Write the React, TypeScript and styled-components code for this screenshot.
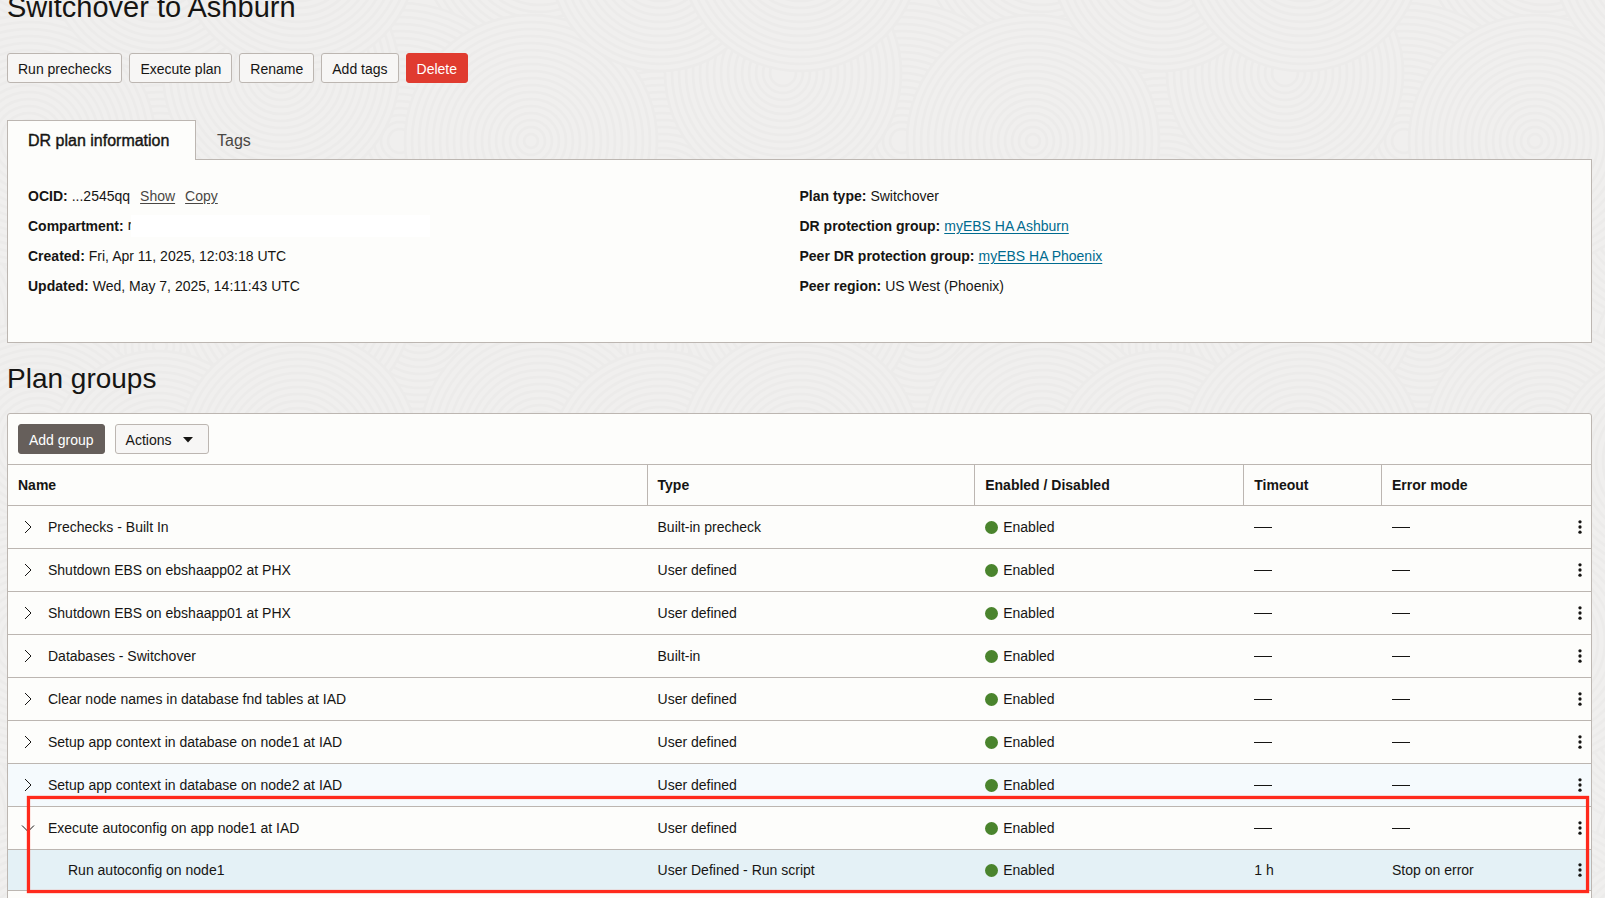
import React from 'react';
import styled, { createGlobalStyle, css } from 'styled-components';

const BORDER = '#bcb6b1';
const SURFACE = '#fdfdfb';
const INK = '#161513';

const GlobalStyle = createGlobalStyle`
  * { box-sizing: border-box; }
  html, body { margin: 0; overflow: hidden; }
  body {
    background: #f0efee;
    color: ${INK};
    font: 14px/20px "Liberation Sans", Arial, sans-serif;
  }
  #root { height: 100vh; overflow: hidden; }
`;

const Page = styled.main`
  position: relative;
  isolation: isolate;
  min-height: 100vh;
  padding: 0 13px 0 7px;
`;

const Backdrop = styled.svg`
  position: absolute;
  inset: 0;
  z-index: -1;
  width: 100%;
  height: 100%;
`;

const Heading = styled.h1`
  margin: 0;
  font-size: 28px;
  line-height: 32px;
  font-weight: 400;
`;

const Title = styled(Heading)`
  margin-top: -9px;
  font-size: 29px;
`;

const SectionTitle = styled(Heading).attrs({ as: 'h2' })`
  margin: 20px 0 18px;
`;

const ButtonRow = styled.div<{ $gap: number }>`
  display: flex;
  gap: ${(p) => p.$gap}px;
`;

type Tone = 'plain' | 'danger' | 'dark';

const tones = {
  plain: css`background: #f7f6f5; border-color: ${BORDER}; color: ${INK};`,
  danger: css`background: #e03b2f; border-color: #e03b2f; color: #fff;`,
  dark: css`background: #665f5b; border-color: #665f5b; color: #fff;`,
};

const Button = styled.button<{ $tone?: Tone }>`
  display: flex;
  align-items: center;
  height: 30px;
  padding: 2px 10px 0;
  border: 1px solid;
  border-radius: 3px;
  font: inherit;
  white-space: nowrap;
  ${(p) => tones[p.$tone ?? 'plain']}
`;

const MenuTrigger = styled(Button)`
  gap: 11px;
  padding-right: 15px;
`;

const Toolbar = styled(ButtonRow)`
  margin-top: 30px;
`;

const Tabs = styled.div`
  display: flex;
  margin-top: 37px;
`;

const Tab = styled.button<{ $active?: boolean }>`
  height: 40px;
  margin-bottom: -1px;
  padding: 0 20px;
  border: 1px solid transparent;
  border-bottom: 0;
  background: transparent;
  color: #4a4744;
  font: inherit;
  font-size: 16px;
  text-align: left;
  z-index: 1;
  ${(p) => p.$active && css`
    min-width: 189px;
    border-color: ${BORDER};
    background: ${SURFACE};
    color: ${INK};
    -webkit-text-stroke: 0.4px ${INK};
  `}
`;

const InfoPanel = styled.section`
  display: grid;
  grid-template-columns: 1fr 1fr;
  min-height: 184px;
  padding: 21px 20px 30px;
  border: 1px solid ${BORDER};
  background: ${SURFACE};
`;

const Facts = styled.dl`
  margin: 0;
`;

const Fact = styled.div`
  display: flex;
  align-items: center;
  gap: 4px;
  height: 30px;
  white-space: nowrap;
`;

const Label = styled.dt`
  font-weight: 700;
`;

const Value = styled.dd`
  display: flex;
  align-items: center;
  gap: 10px;
  margin: 0;
`;

const Link = styled.a<{ $muted?: boolean }>`
  color: ${(p) => (p.$muted ? '#4a4744' : '#006b8f')};
  text-underline-offset: 2px;
`;

const Redacted = styled.span`
  display: flex;
  overflow: hidden;
  width: 302px;
  height: 22px;
`;

const Visible = styled.span`
  overflow: hidden;
  width: 3px;
`;

const Mask = styled.span`
  flex: 1;
  background: #fff;
`;

const Card = styled.section`
  border: 1px solid ${BORDER};
  border-radius: 3px 3px 0 0;
  background: ${SURFACE};
`;

const CardBar = styled.div`
  padding: 10px;
`;

const TableArea = styled.div`
  position: relative;
`;

const Table = styled.table`
  width: 100%;
  table-layout: fixed;
  border-collapse: separate;
  border-spacing: 0;
`;

const Col = styled.col<{ $width?: string }>`
  width: ${(p) => p.$width ?? 'auto'};
`;

const HeadCell = styled.th`
  height: 42px;
  padding: 0 10px;
  border: solid ${BORDER};
  border-width: 1px 0 1px 0;
  text-align: left;
  font-weight: 700;
  &:not(:last-child) { border-right-width: 1px; }
`;

type Shade = 'none' | 'hover' | 'child';
const shades: Record<Shade, string> = { none: 'transparent', hover: '#f5fafd', child: '#e4f1f6' };

const Row = styled.tr<{ $shade: Shade }>`
  height: ${(p) => (p.$shade === 'child' ? 41 : 43)}px;
  background: ${(p) => shades[p.$shade]};
`;

const Cell = styled.td`
  padding: 0 0 0 10px;
  border-bottom: 1px solid ${BORDER};
  white-space: nowrap;
`;

const NameCell = styled(Cell)<{ $child: boolean }>`
  padding-left: ${(p) => (p.$child ? 60 : 10)}px;
`;

const NameLine = styled.div`
  display: flex;
  align-items: center;
  gap: 10px;
`;

const IconButton = styled.button`
  display: flex;
  align-items: center;
  justify-content: center;
  width: 20px;
  height: 20px;
  padding: 0;
  border: 0;
  background: none;
  color: ${INK};
`;

const MenuButton = styled(IconButton)`
  width: 4px;
`;

const Status = styled.span`
  display: flex;
  align-items: center;
  gap: 5px;
  &::before {
    content: '';
    width: 13px;
    height: 13px;
    border-radius: 50%;
    background: #4a842d;
  }
`;

const Dash = styled.span`
  display: block;
  width: 18px;
  height: 1px;
  background: ${INK};
`;

const Highlight = styled.div`
  position: absolute;
  left: 19px;
  right: 2px;
  bottom: -2px;
  height: 97px;
  border: 3px solid #ff2a1c;
  box-shadow: 0 0 1px #ff2a1c, inset 0 0 1px #ff2a1c;
  pointer-events: none;
`;

const NextRow = styled.div`
  height: 40px;
`;

const Chevron = ({ open }: { open?: boolean }) => (
  <svg width="14" height="14" viewBox="0 0 14 14" fill="none" stroke="currentColor" strokeWidth="1" aria-hidden="true">
    <path d={open ? 'M1 4.5 7 10.5 13 4.5' : 'M4 1 10 7 4 13'} />
  </svg>
);

const Dots = () => (
  <svg width="4" height="14" viewBox="0 0 4 14" fill="currentColor" aria-hidden="true">
    <circle cx="2" cy="1.8" r="1.65" />
    <circle cx="2" cy="7" r="1.65" />
    <circle cx="2" cy="12.2" r="1.65" />
  </svg>
);

const Caret = () => (
  <svg width="10" height="6" viewBox="0 0 10 6" fill="currentColor" aria-hidden="true">
    <path d="M0 0H10L5 5.5Z" />
  </svg>
);

const TILE_W = 502;
const TILE_H = 500;

// Each ripple is [centre x, centre y, outer radius]; later ones lie over earlier ones.
const RIPPLES: [number, number, number][] = [
  [160, 210, 130], [420, 330, 130], [160, 355, 70], [38, 450, 120],
  [400, 150, 138], [281, 82, 118], [29, 150, 126],
  [295, 310, 118], [158, -30, 110], [298, -40, 120],
];

const Ripples = () => (
  <Backdrop aria-hidden="true">
    <defs>
      <pattern id="ripples" width={TILE_W} height={TILE_H} patternUnits="userSpaceOnUse">
        {RIPPLES.flatMap(([x, y, r]) =>
          [-TILE_W, 0, TILE_W].flatMap((dx) =>
            [-TILE_H, 0, TILE_H].map((dy) => (
              <g key={`${x}-${y}-${dx}-${dy}`} fill="#f0efee" stroke="#ecebea" strokeWidth="2.5">
                {Array.from({ length: Math.floor(r / 7) }, (_, i) => (
                  <circle key={i} cx={x + dx} cy={y + dy} r={r - i * 7} />
                ))}
              </g>
            )),
          ),
        )}
      </pattern>
    </defs>
    <rect width="100%" height="100%" fill="url(#ripples)" />
  </Backdrop>
);

interface Group {
  name: string;
  type: string;
  timeout?: string;
  error?: string;
  shade?: Shade;
  open?: boolean;
}

const GROUPS: Group[] = [
  { name: 'Prechecks - Built In', type: 'Built-in precheck' },
  { name: 'Shutdown EBS on ebshaapp02 at PHX', type: 'User defined' },
  { name: 'Shutdown EBS on ebshaapp01 at PHX', type: 'User defined' },
  { name: 'Databases - Switchover', type: 'Built-in' },
  { name: 'Clear node names in database fnd tables at IAD', type: 'User defined' },
  { name: 'Setup app context in database on node1 at IAD', type: 'User defined' },
  { name: 'Setup app context in database on node2 at IAD', type: 'User defined', shade: 'hover' },
  { name: 'Execute autoconfig on app node1 at IAD', type: 'User defined', open: true },
  { name: 'Run autoconfig on node1', type: 'User Defined - Run script', timeout: '1 h', error: 'Stop on error', shade: 'child' },
];

const GroupRow = ({ group }: { group: Group }) => {
  const child = group.shade === 'child';
  return (
    <Row $shade={group.shade ?? 'none'}>
      <NameCell $child={child}>
        <NameLine>
          {!child && (
            <IconButton type="button" aria-label={`Toggle ${group.name}`} aria-expanded={!!group.open}>
              <Chevron open={group.open} />
            </IconButton>
          )}
          {group.name}
        </NameLine>
      </NameCell>
      <Cell>{group.type}</Cell>
      <Cell><Status>Enabled</Status></Cell>
      <Cell>{group.timeout ?? <Dash />}</Cell>
      <Cell>{group.error ?? <Dash />}</Cell>
      <Cell>
        <MenuButton type="button" aria-label={`Actions for ${group.name}`}><Dots /></MenuButton>
      </Cell>
    </Row>
  );
};

export default function App() {
  return (
    <Page>
      <GlobalStyle />
      <Ripples />
      <Title>Switchover to Ashburn</Title>
      <Toolbar $gap={7}>
        <Button type="button">Run prechecks</Button>
        <Button type="button">Execute plan</Button>
        <Button type="button">Rename</Button>
        <Button type="button">Add tags</Button>
        <Button type="button" $tone="danger">Delete</Button>
      </Toolbar>

      <Tabs role="tablist">
        <Tab type="button" role="tab" aria-selected="true" $active>DR plan information</Tab>
        <Tab type="button" role="tab" aria-selected="false">Tags</Tab>
      </Tabs>
      <InfoPanel>
        <Facts>
          <Fact>
            <Label>OCID:</Label>
            <Value>...2545qq <Link href="#show" $muted>Show</Link> <Link href="#copy" $muted>Copy</Link></Value>
          </Fact>
          <Fact>
            <Label>Compartment:</Label>
            <Value><Redacted><Visible>r</Visible><Mask /></Redacted></Value>
          </Fact>
          <Fact><Label>Created:</Label><Value>Fri, Apr 11, 2025, 12:03:18 UTC</Value></Fact>
          <Fact><Label>Updated:</Label><Value>Wed, May 7, 2025, 14:11:43 UTC</Value></Fact>
        </Facts>
        <Facts>
          <Fact><Label>Plan type:</Label><Value>Switchover</Value></Fact>
          <Fact><Label>DR protection group:</Label><Value><Link href="#ashburn">myEBS HA Ashburn</Link></Value></Fact>
          <Fact><Label>Peer DR protection group:</Label><Value><Link href="#phoenix">myEBS HA Phoenix</Link></Value></Fact>
          <Fact><Label>Peer region:</Label><Value>US West (Phoenix)</Value></Fact>
        </Facts>
      </InfoPanel>

      <SectionTitle>Plan groups</SectionTitle>
      <Card>
        <CardBar>
          <ButtonRow $gap={10}>
            <Button type="button" $tone="dark">Add group</Button>
            <MenuTrigger type="button" aria-haspopup="menu">Actions <Caret /></MenuTrigger>
          </ButtonRow>
        </CardBar>
        <TableArea>
          <Table>
            <colgroup>
              <Col $width="40.4%" />
              <Col $width="20.7%" />
              <Col $width="17%" />
              <Col $width="8.7%" />
              <Col />
              <Col $width="23px" />
            </colgroup>
            <thead>
              <tr>
                <HeadCell scope="col">Name</HeadCell>
                <HeadCell scope="col">Type</HeadCell>
                <HeadCell scope="col">Enabled / Disabled</HeadCell>
                <HeadCell scope="col">Timeout</HeadCell>
                <HeadCell scope="col" colSpan={2}>Error mode</HeadCell>
              </tr>
            </thead>
            <tbody>
              {GROUPS.map((g) => <GroupRow key={g.name} group={g} />)}
            </tbody>
          </Table>
          <Highlight />
        </TableArea>
        <NextRow />
      </Card>
    </Page>
  );
}
